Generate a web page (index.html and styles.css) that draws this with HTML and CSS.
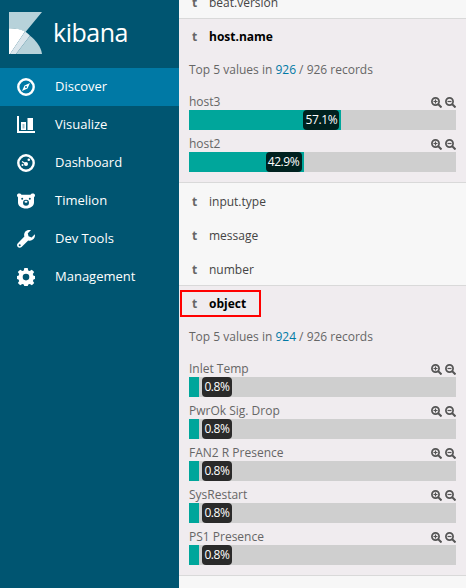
FILE: index.html
```html
<!DOCTYPE html>
<html lang="en">
<head>
<meta charset="utf-8">
<title>Kibana Discover</title>
<link rel="stylesheet" href="styles.css">
</head>
<body>
<svg class="defs" width="0" height="0" aria-hidden="true">
  <symbol id="zoom-in" viewBox="0 0 11 11"><circle cx="4.500" cy="4.500" r="3.600" fill="none" stroke="#555" stroke-width="1.700"/><path d="M2.500 4.500h4M4.500 2.500v4" fill="none" stroke="#555" stroke-width="1.200"/><path d="M7 7l3.500 3.500" fill="none" stroke="#555" stroke-width="2"/></symbol>
  <symbol id="zoom-out" viewBox="0 0 11 11"><circle cx="4.500" cy="4.500" r="3.600" fill="none" stroke="#555" stroke-width="1.700"/><path d="M2.500 4.500h4" fill="none" stroke="#555" stroke-width="1.200"/><path d="M7 7l3.500 3.500" fill="none" stroke="#555" stroke-width="2"/></symbol>
</svg>
<div class="app">
  <nav class="sidebar">
    <div class="brand">
      <svg class="brand-logo" viewBox="0 0 33 42" aria-hidden="true">
        <path d="M0 0H33L16.500 20C11.500 17 6 16 0 16.200Z" fill="#b7d2da"/>
        <path d="M0 16.200C6 16 11.500 17 16 19.500L1 42H0Z" fill="#fff"/>
        <path d="M16 19.500C18 20.800 19.500 22 21 23.800L7 42H1Z" fill="#dbe6ec"/>
        <path d="M21 23.800C27 28.500 32 35 33 42H7Z" fill="#b7d2da"/>
      </svg>
      <span class="brand-name">kibana</span>
    </div>
    <a class="nav-item active">
      <svg class="nav-icon" viewBox="0 0 18 18" aria-hidden="true"><circle cx="9" cy="9" r="7.700" fill="none" stroke="#fff" stroke-width="2.400"/><path d="M13 5 10.500 10.500 5 13 7.500 7.500ZM9 8a1 1 0 1 0 0 2 1 1 0 0 0 0-2Z" fill="#fff" fill-rule="evenodd"/></svg>
      <span>Discover</span>
    </a>
    <a class="nav-item">
      <svg class="nav-icon" viewBox="0 0 18 18" aria-hidden="true"><path d="M0 0H2V15H18V17H0ZM4 6H9V14H4ZM10.500 2H16V14H10.500Z" fill="#fff"/><path d="M5.500 8H7.500V12.500H5.500Z" fill="#9fc0cc"/></svg>
      <span>Visualize</span>
    </a>
    <a class="nav-item">
      <svg class="nav-icon" viewBox="0 0 18 18" aria-hidden="true"><circle cx="9" cy="9" r="7.700" fill="none" stroke="#fff" stroke-width="2.400"/><circle cx="9" cy="10" r="2" fill="#fff"/><path d="M9 10 5 7.500" stroke="#fff" stroke-width="1.400"/><circle cx="11.800" cy="5.800" r="1.300" fill="#fff"/><circle cx="5.500" cy="11" r="1" fill="#fff"/></svg>
      <span>Dashboard</span>
    </a>
    <a class="nav-item">
      <svg class="nav-icon" viewBox="0 0 18 18" aria-hidden="true"><path d="M0 3.200C0 2 1 1.500 2.200 1.500 3.300 1.500 4 2 4.500 2.700H13.500C14 2 14.700 1.500 15.800 1.500 17 1.500 18 2 18 3.200 18 4.300 17.400 5 17 5.300V10.500C17 14 13.500 16.500 9 16.500S1 14 1 10.500V5.300C.6 5 0 4.300 0 3.200Z" fill="#fff"/><ellipse cx="9" cy="10.800" rx="3" ry="3" fill="#005571"/><ellipse cx="9" cy="9.800" rx="1.500" ry="1" fill="#fff"/><circle cx="5.200" cy="6.800" r="1" fill="#005571"/><circle cx="12.800" cy="6.800" r="1" fill="#005571"/></svg>
      <span>Timelion</span>
    </a>
    <a class="nav-item">
      <svg class="nav-icon" viewBox="0 0 18 18" aria-hidden="true"><path d="M17.800 4.200 14.600 7.400 11.500 6.300 10.800 3.300 13.900.2C11.700-.5 9.300.2 8 2 7 3.400 6.900 5.200 7.400 6.600L.8 13.200C-.3 14.300-.2 16 .8 17 1.900 18.100 3.500 18 4.600 17L11.200 10.400C12.800 11 14.800 10.700 16.200 9.300 17.700 7.900 18.300 6 17.800 4.200ZM2.700 16.200A1 1 0 1 1 2.700 14.200 1 1 0 0 1 2.700 16.200Z" fill="#fff" fill-rule="evenodd"/></svg>
      <span>Dev Tools</span>
    </a>
    <a class="nav-item">
      <svg class="nav-icon" viewBox="0 0 18 18" aria-hidden="true"><path d="M7.300 0H10.700L11.200 2.400 12.700 3 14.800 1.700 17.200 4 15.800 6.100 16.500 7.700 18 8V11.100L16.500 11.500 15.900 13 17.200 15 14.900 17.300 12.800 16 11.200 16.600 10.700 18.200H7.300L6.800 16.600 5.300 16 3.200 17.300.9 15 2.200 13 1.500 11.500 0 11.100V8L1.500 7.700 2.200 6.100.8 4 3.200 1.700 5.300 3 6.800 2.400ZM9 5.800A3.300 3.300 0 1 0 9 12.400 3.300 3.300 0 0 0 9 5.800Z" fill="#fff" fill-rule="evenodd"/></svg>
      <span>Management</span>
    </a>
  </nav>
  <main class="fields">
    <div class="field">
      <span class="field-type">t</span><span class="field-name">beat.version</span>
    </div>
    <section class="field-open">
      <div class="field"><span class="field-type">t</span><span class="field-name strong">host.name</span></div>
      <p class="summary">Top 5 values in <span class="count">926</span> / 926 records</p>
      <div class="values">
        <div class="value">
          <div class="value-head"><span>host3</span><span class="tools"><svg><use href="#zoom-in"/></svg><svg><use href="#zoom-out"/></svg></span></div>
          <div class="bar"><div class="fill" style="width:57.1%"><span class="tip">57.1%</span></div></div>
        </div>
        <div class="value">
          <div class="value-head"><span>host2</span><span class="tools"><svg><use href="#zoom-in"/></svg><svg><use href="#zoom-out"/></svg></span></div>
          <div class="bar"><div class="fill" style="width:42.9%"><span class="tip">42.9%</span></div></div>
        </div>
      </div>
    </section>
    <div class="field"><span class="field-type">t</span><span class="field-name">input.type</span></div>
    <div class="field"><span class="field-type">t</span><span class="field-name">message</span></div>
    <div class="field"><span class="field-type">t</span><span class="field-name">number</span></div>
    <section class="field-open">
      <div class="field highlighted"><span class="field-type">t</span><span class="field-name strong">object</span></div>
      <p class="summary">Top 5 values in <span class="count">924</span> / 926 records</p>
      <div class="values">
        <div class="value">
          <div class="value-head"><span>Inlet Temp</span><span class="tools"><svg><use href="#zoom-in"/></svg><svg><use href="#zoom-out"/></svg></span></div>
          <div class="bar"><div class="fill small"><span class="tip">0.8%</span></div></div>
        </div>
        <div class="value">
          <div class="value-head"><span>PwrOk Sig. Drop</span><span class="tools"><svg><use href="#zoom-in"/></svg><svg><use href="#zoom-out"/></svg></span></div>
          <div class="bar"><div class="fill small"><span class="tip">0.8%</span></div></div>
        </div>
        <div class="value">
          <div class="value-head"><span>FAN2 R Presence</span><span class="tools"><svg><use href="#zoom-in"/></svg><svg><use href="#zoom-out"/></svg></span></div>
          <div class="bar"><div class="fill small"><span class="tip">0.8%</span></div></div>
        </div>
        <div class="value">
          <div class="value-head"><span>SysRestart</span><span class="tools"><svg><use href="#zoom-in"/></svg><svg><use href="#zoom-out"/></svg></span></div>
          <div class="bar"><div class="fill small"><span class="tip">0.8%</span></div></div>
        </div>
        <div class="value">
          <div class="value-head"><span>PS1 Presence</span><span class="tools"><svg><use href="#zoom-in"/></svg><svg><use href="#zoom-out"/></svg></span></div>
          <div class="bar"><div class="fill small"><span class="tip">0.8%</span></div></div>
        </div>
      </div>
    </section>
  </main>
</div>
</body>
</html>
```
FILE: styles.css
```css
*, *::after { box-sizing: border-box; }
html, body { margin: 0; height: 100%; overflow: hidden; background: #fff; }
body { font-family: "Open Sans", "Noto Sans", sans-serif; font-size: 13px; color: #555; }
.defs { display: block; }
.app { display: flex; height: 588px; }

.sidebar { flex: 0 0 179px; background: #005571; color: #fff; }
.brand { height: 68px; display: flex; align-items: flex-start; padding: 12px 0 0 9px; }
.brand-logo { width: 33px; height: 42px; flex: none; }
.brand-name { margin: 0 0 0 11px; font-size: 25px; font-weight: 500; letter-spacing: -.5px; line-height: 40px; }
.nav-item { height: 38px; display: flex; align-items: center; padding-left: 17px; gap: 20px; }
.nav-item span { margin-bottom: 2px; }
.nav-item.active { background: #0079a5; }
.nav-icon { width: 18px; height: 18px; flex: none; }

.fields { flex: 0 0 287px; background: #f7f7f7; margin-top: -16px; height: 604px; overflow: hidden; font-size: 12px; }
.field { height: 34px; display: flex; align-items: center; padding-left: 13px; position: relative; color: #444; }
.fields > .field { padding-top: 2px; }
.field-type { width: 17px; font-weight: 700; color: #666; }
.strong { font-weight: 700; color: #000; }

.field-open { background: #f0ecef; border-top: 1px solid #d9d9d9; border-bottom: 1px solid #d9d9d9; height: 165px; }
.field-open:last-child { height: 291px; }
.summary { margin: 0; padding-left: 10px; height: 34px; line-height: 34px; color: #666; }
.count { color: #0079a5; }

.values { padding: 5px 10px 0; display: flex; flex-direction: column; gap: 4px; }
.value-head { height: 18px; padding-top: 2px; display: flex; justify-content: space-between; align-items: center; line-height: 16px; color: #666; }
.tools { display: flex; gap: 3px; }
.tools svg { width: 11px; height: 11px; display: block; }

.bar { height: 20px; background: #cfcfcf; }
.fill { height: 100%; background: #00a69b; position: relative; }
.fill.small { width: 10px; }
.tip { position: absolute; top: 0; right: 2px; width: 36px; height: 20px; border-radius: 4px; background: rgba(0, 0, 0, .8); color: #fff; font-size: 12px; letter-spacing: -.4px; line-height: 20px; text-align: center; }
.small .tip { right: auto; left: 13px; width: 30px; }

.highlighted::after { content: ""; position: absolute; left: 1px; top: 4px; width: 81px; height: 27px; border: 2px solid #f00; }
```
